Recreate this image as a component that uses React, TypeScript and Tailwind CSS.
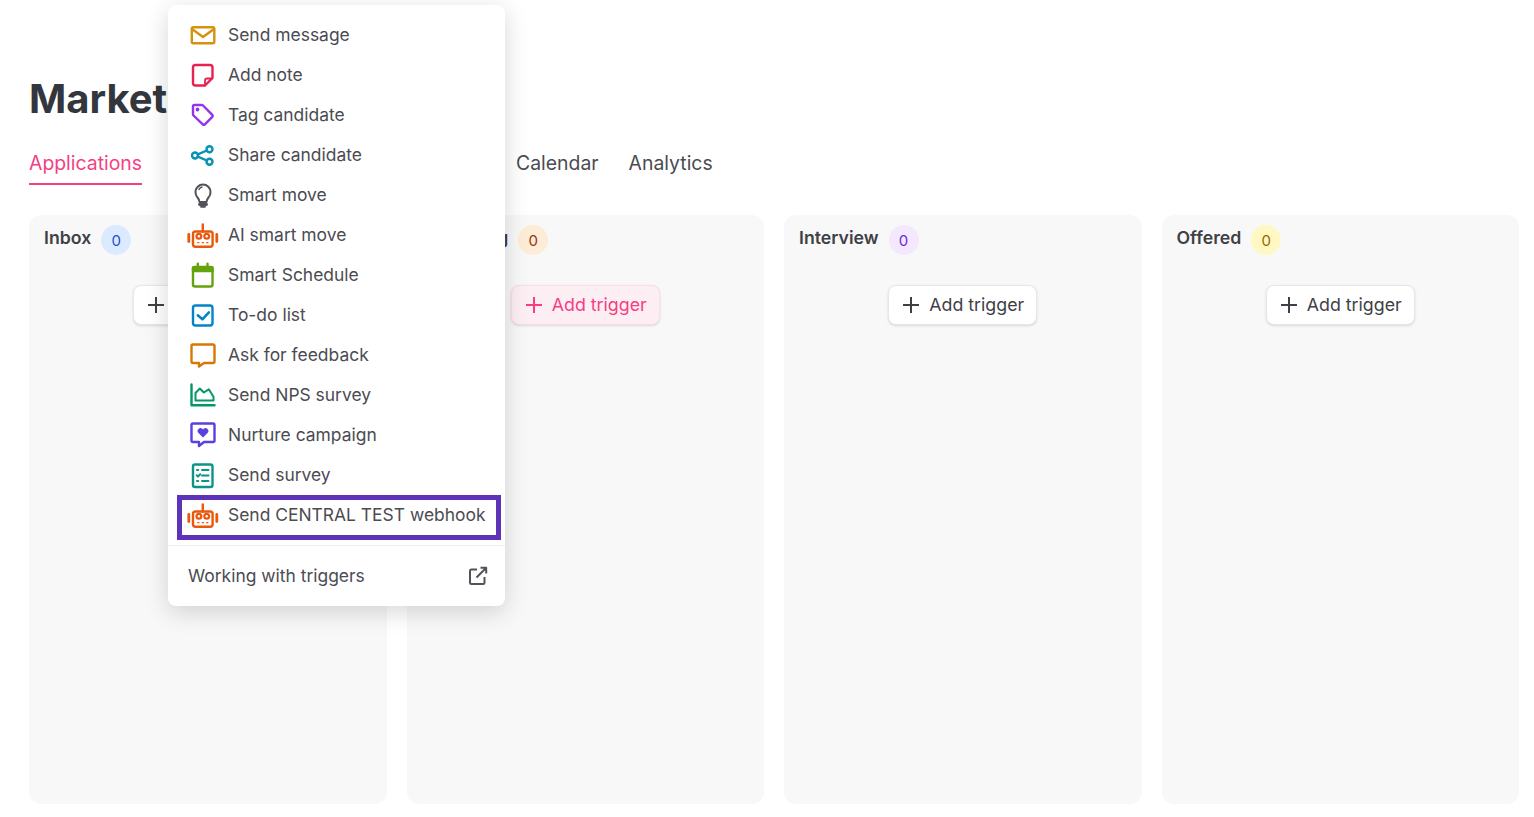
import React from "react";

const S = ({ c, children }: { c: string; children: React.ReactNode }) => (
  <svg width="32" height="32" viewBox="0 0 32 32" fill="none" stroke={c} strokeWidth="2.4" strokeLinecap="round" strokeLinejoin="round" className="shrink-0">
    {children}
  </svg>
);

const Robot = () => (
  <S c="#ea580c">
    <rect x="6" y="12.500" width="19.600" height="15.200" rx="2.500" />
    <path d="M15.800 5.500v7" />
    <circle cx="11.900" cy="17.300" r="2.400" strokeWidth="2.200" />
    <circle cx="19.700" cy="17.300" r="2.400" strokeWidth="2.200" />
    <path d="M10.200 23.600h2.200M14.700 23.600h2.200M19.200 23.600h2.200" strokeLinecap="butt" strokeWidth="1.400" />
    <path d="M1.800 15.500v7M29.800 15.500v7" strokeWidth="2.800" />
  </S>
);

const icons: Record<string, React.ReactNode> = {
  mail: (
    <S c="#d4920f">
      <rect x="4.800" y="8.200" width="22.500" height="16" rx="1.500" />
      <path d="M5 10l11 8L27 10" />
    </S>
  ),
  note: (
    <S c="#e8214f">
      <path d="M18 26.500H8.500a2.500 2.500 0 0 1-2.500-2.500V8.500A2.500 2.500 0 0 1 8.500 6h14.500A2.500 2.500 0 0 1 25.500 8.500V19z" />
      <path d="M18 26.500v-5a2 2 0 0 1 2-2h5" strokeWidth="1.800" />
    </S>
  ),
  tag: (
    <S c="#9333ea">
      <path d="M7.500 6h7.500a1.500 1.500 0 0 1 1 .5l9.300 9.300a1.500 1.500 0 0 1 0 2.100l-7.400 7.400a1.500 1.500 0 0 1-2.100 0L6.500 16.500a1.500 1.500 0 0 1-.5-1V7.500A1.500 1.500 0 0 1 7.500 6z" />
      <circle cx="10.500" cy="10.500" r="0.700" fill="#9333ea" />
    </S>
  ),
  share: (
    <S c="#0891b2">
      <circle cx="8" cy="16.500" r="3" />
      <circle cx="22.500" cy="10.300" r="3" />
      <circle cx="22.500" cy="22.700" r="3" />
      <path d="M10.800 15.300l9-3.800M10.800 17.700l9 3.800" />
    </S>
  ),
  bulb: (
    <S c="#52525b">
      <path d="M12.500 23c0-2-.7-3-2-4.500A8 8 0 0 1 8.500 13a7.500 7.500 0 0 1 15 0 8 8 0 0 1-2 5.500c-1.300 1.500-2 2.500-2 4.500z" strokeWidth="2" />
      <path d="M12 10.500A4.500 4.500 0 0 1 15 8" strokeWidth="1.400" />
      <path d="M12.500 25.500h7" strokeWidth="2.800" />
      <path d="M14 27.800h4" strokeWidth="1.800" />
    </S>
  ),
  robot: <Robot />,
  cal: (
    <S c="#65a30d">
      <rect x="6" y="8" width="19.500" height="19.500" rx="2" />
      <rect x="6" y="8.500" width="19.500" height="3.500" fill="#65a30d" />
      <path d="M10.800 4.800v4M20.500 4.800v4" />
    </S>
  ),
  todo: (
    <S c="#0284c7">
      <rect x="6" y="6.500" width="19.500" height="20" rx="2.500" />
      <path d="M10.800 16.300l4.600 4 6.500-7" strokeWidth="2.500" />
    </S>
  ),
  bubble: (
    <S c="#d97706">
      <path d="M6 5.500h20a1.500 1.500 0 0 1 1.500 1.500v15.500a1.500 1.500 0 0 1-1.500 1.500h-9l-5 3.500V24H6a1.500 1.500 0 0 1-1.500-1.500V7A1.500 1.500 0 0 1 6 5.500z" />
    </S>
  ),
  nps: (
    <S c="#059669">
      <path d="M4.500 5.500V26.300h23" />
      <path d="M8.500 21.500v-7.500l4.300-4.500 4 4 5-3.200 4.700 7.500v3.700z" strokeWidth="2" />
    </S>
  ),
  nurture: (
    <S c="#5b3fe0">
      <path d="M6 4.500h20a1.500 1.500 0 0 1 1.500 1.500v15.500a1.500 1.500 0 0 1-1.500 1.500h-9l-5 4V23H6a1.500 1.500 0 0 1-1.500-1.500V6A1.500 1.500 0 0 1 6 4.500z" />
      <path d="M16 18.500l-4.500-4.500a2.800 2.800 0 0 1 4-4l.5.500.5-.5a2.800 2.800 0 0 1 4 4z" fill="#5b3fe0" stroke="none" />
    </S>
  ),
  survey: (
    <S c="#0d9488">
      <rect x="6" y="5.500" width="19.500" height="22.500" rx="2" />
      <path d="M10 11h1.200M15 11h6.500M9.700 16.300l1.300 1.300 2.200-2.400M15 16.500h6.500M10 22h1.200M15 22h6.500" strokeWidth="2" />
    </S>
  ),
};

const rows: [string, string][] = [
  ["mail", "Send message"],
  ["note", "Add note"],
  ["tag", "Tag candidate"],
  ["share", "Share candidate"],
  ["bulb", "Smart move"],
  ["robot", "AI smart move"],
  ["cal", "Smart Schedule"],
  ["todo", "To-do list"],
  ["bubble", "Ask for feedback"],
  ["nps", "Send NPS survey"],
  ["nurture", "Nurture campaign"],
  ["survey", "Send survey"],
  ["robot", "Send CENTRAL TEST webhook"],
];

const Plus = ({ c }: { c: string }) => (
  <svg width="16" height="16" viewBox="0 0 16 16" fill="none" stroke={c} strokeWidth="2" className="shrink-0">
    <path d="M8 0v16M0 8h16" />
  </svg>
);

const columns = [
  { name: "Inbox", badge: "bg-[#dbeafe] text-[#1d4ed8]", pink: false },
  { name: "Screening", badge: "bg-[#fdecd6] text-[#9a3412]", pink: true },
  { name: "Interview", badge: "bg-[#f3e8ff] text-[#6d28d9]", pink: false },
  { name: "Offered", badge: "bg-[#fef9c3] text-[#a16207]", pink: false },
];

export default function App() {
  return (
    <div
      className="relative h-[817px] w-[1534px] overflow-hidden bg-white pl-[29px] pr-[15px] pt-[75px] text-[#3f3f46]"
      style={{ fontFamily: "Inter, 'Liberation Sans', sans-serif" }}
    >
      <h1 className="h-[48px] text-[40px] font-bold leading-[48px] text-[#33363d]">Marketing</h1>

      <div className="mt-[26px] flex text-[19.4px] leading-[28px]">
        <div className="border-b-2 border-[#f43f83] pb-[6px] text-[#f43f83]">Applications</div>
        <div className="w-[374px]" />
        <div className="pb-[8px] text-[#4b4b52]">Calendar</div>
        <div className="ml-[30px] pb-[8px] text-[#4b4b52]">Analytics</div>
      </div>

      <div className="mt-[30px] grid h-[589px] grid-cols-4 gap-5">
        {columns.map((c) => (
          <div key={c.name} className="rounded-xl bg-[#f8f8f8] px-[15px] pt-[10px]">
            <div className="flex h-[30px] items-start gap-[10px]">
              <span className="text-[17.7px] font-semibold leading-[26px] text-[#3f3f46]">{c.name}</span>
              <span className={`flex h-[30px] w-[30px] items-center justify-center rounded-full pt-[2px] text-[15px] ${c.badge}`}>0</span>
            </div>
            <div className="mt-[30px] flex justify-center">
              <div
                className={
                  c.pink
                    ? "flex h-10 w-[149px] items-center justify-center gap-[10px] rounded-lg border border-[#f9dde8] bg-[#fdeef4] pl-[2px] text-[17.8px] text-[#f43f83] shadow-sm"
                    : "flex h-10 w-[149px] items-center justify-center gap-[10px] rounded-lg border border-[#e7e7e7] bg-white pl-[2px] text-[17.8px] text-[#3f3f46] shadow-sm"
                }
              >
                <Plus c={c.pink ? "#f43f83" : "#3f3f46"} />
                Add trigger
              </div>
            </div>
          </div>
        ))}
      </div>

      <div className="absolute left-[168px] top-[5px] h-[601px] w-[337px] rounded-lg bg-white pt-[10px] text-[17.45px] text-[#4b4b52] shadow-[0_6px_24px_rgba(0,0,0,0.16)]">
        {rows.map(([icon, label], i) => (
          <div key={label} className="relative flex h-10 items-center gap-[9px] pl-[19px]">
            {icons[icon]}
            <span className="whitespace-nowrap">{label}</span>
            {i === rows.length - 1 && (
              <div className="absolute left-[9px] right-[4px] top-0 h-[45px] border-[5px] border-[#5f33b8]" />
            )}
          </div>
        ))}
        <div className="mt-[10px] h-px bg-[#eeeeee]" />
        <div className="flex h-[60px] items-center justify-between pl-5 pr-[17px]">
          <span>Working with triggers</span>
          <svg width="20" height="20" viewBox="0 0 20 20" fill="none" stroke="#52525b" strokeWidth="2" strokeLinejoin="round">
            <path d="M9 3.500H3.500a1.500 1.500 0 0 0-1.500 1.500v11.500a1.500 1.500 0 0 0 1.500 1.500H15a1.500 1.500 0 0 0 1.500-1.500V11" />
            <path d="M8.500 11.500L18 2M12.500 1.800H18.200V7.500" />
          </svg>
        </div>
      </div>
    </div>
  );
}
